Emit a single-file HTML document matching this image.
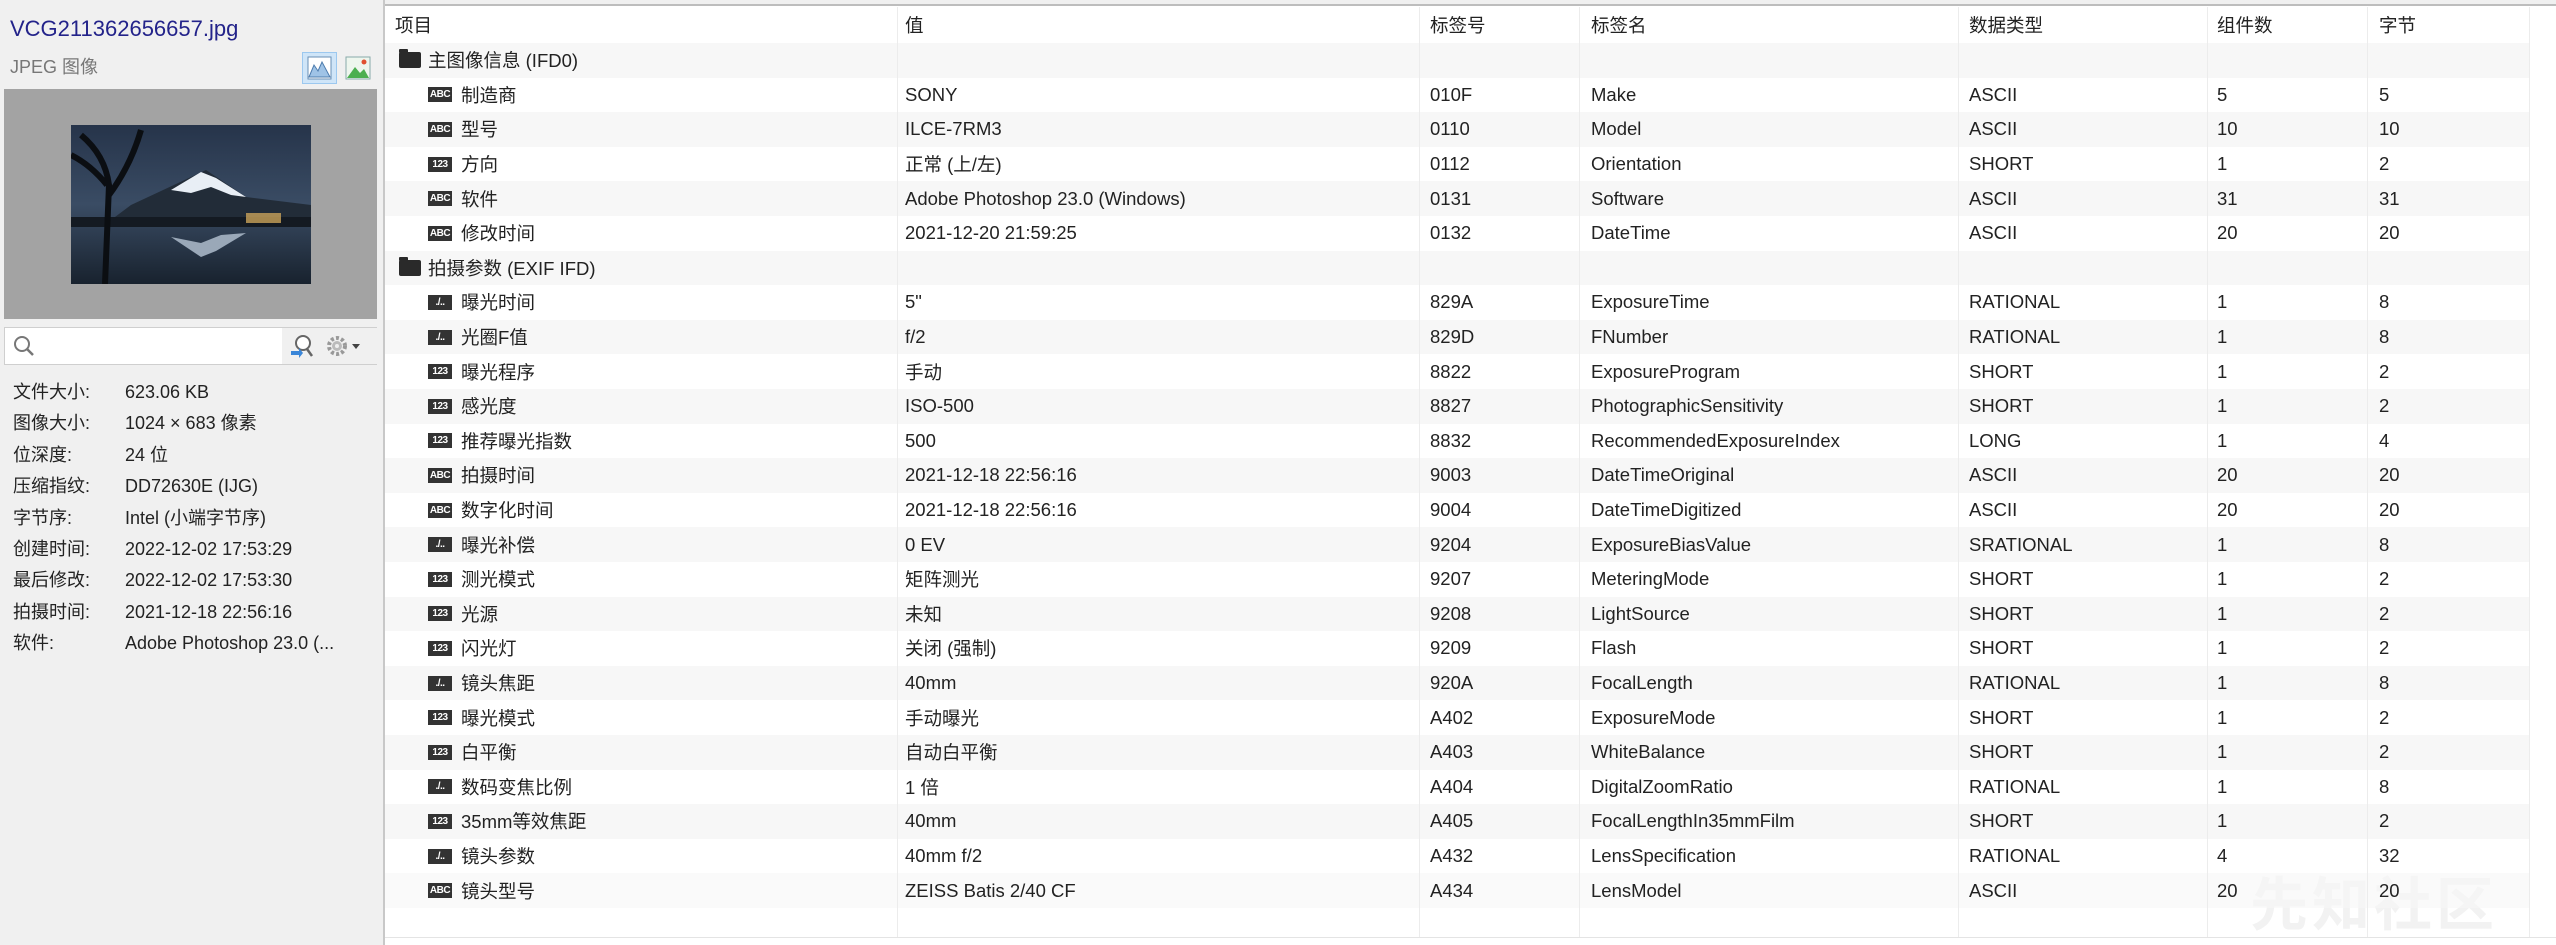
<!DOCTYPE html>
<html><head><meta charset="utf-8">
<style>
*{margin:0;padding:0;box-sizing:border-box}
body{width:2556px;height:945px;overflow:hidden;background:#f0f0f0;font-family:"Liberation Sans","Noto Sans CJK SC",sans-serif;font-size:18.5px;color:#222;position:relative}
.left{position:absolute;left:0;top:0;width:383px;height:945px;background:#f0f0f0}
.fn{position:absolute;left:10px;top:16px;font-size:22px;color:#23238a}
.jp{position:absolute;left:10px;top:53px;font-size:18px;color:#777}
.ic1{position:absolute;left:302px;top:52px;width:35px;height:32px;background:#cfe5f8;border:1px solid #9cc8ef}
.ic2{position:absolute;left:345px;top:55px;width:26px;height:26px}
.prev{position:absolute;left:4px;top:89px;width:373px;height:230px;background:#a3a3a3}
.search{position:absolute;left:4px;top:327px;width:373px;height:38px;background:#fff;border:1px solid #cfcfcf}
.info{position:absolute;left:13px;font-size:18px;color:#222;height:26px;line-height:26px;width:370px;white-space:nowrap}
.info span{display:inline-block;width:112px;vertical-align:top}
.info b{font-weight:normal;display:inline-block;vertical-align:top}
.right{position:absolute;left:383px;top:0;width:2173px;height:945px;background:#fff;border-left:2px solid #c8c8c8}
.topline{position:absolute;left:385px;top:0;width:2171px;height:6px;background:#f0f0f0;border-bottom:2px solid #bdbdbd}
.row{position:absolute;left:385px;width:2145px;height:34.6px;display:flex;align-items:center;white-space:nowrap}
.row.g{background:#f7f7f7}
.c{flex:none;height:100%;display:flex;align-items:center;border-right:1px solid #ececec;overflow:hidden}
.c1{width:513px;padding-left:10px}.c2{width:522px;padding-left:7px}.c3{width:160px;padding-left:10px}.c4{width:379px;padding-left:11px}.c5{width:249px;padding-left:10px}.c6{width:160px;padding-left:9px}.c7{width:162px;padding-left:11px}
.bd{display:inline-block;width:24px;height:15px;background:#333;color:#fff;font-size:10px;font-weight:bold;line-height:15px;text-align:center;margin-left:33px;margin-right:9px;letter-spacing:-0.5px}
.fold{display:inline-block;width:22px;height:16px;background:#2a2a2a;border-radius:2px;margin-left:4px;margin-right:7px;position:relative}
.fold:before{content:"";position:absolute;left:0;top:-3px;width:9px;height:4px;background:#2a2a2a;border-radius:1px}
.wm{position:absolute;left:2250px;top:858px;font-size:58px;color:#f2f2f2;font-family:"Noto Sans CJK SC",sans-serif;font-weight:bold;letter-spacing:4px}
.bot{position:absolute;left:385px;top:937px;width:2171px;height:1px;background:#e4e4e4}
</style></head><body>
<div class="left">
<div class="fn">VCG211362656657.jpg</div>
<div class="jp">JPEG 图像</div>
<div class="ic1"><svg width="33" height="30" viewBox="0 0 33 30"><rect x="5" y="4" width="23" height="22" fill="#fff" stroke="#6a8fb5"/><path d="M6 24 L11 12 L15 18 L19 9 L27 24Z" fill="#9fc3e6" stroke="#4d7cae"/></svg></div>
<div class="ic2"><svg width="26" height="26" viewBox="0 0 26 26"><rect x="1" y="2" width="24" height="22" fill="#eef6ee" stroke="#8aa"/><path d="M2 23 L10 12 L15 18 L19 14 L24 23Z" fill="#4caf50"/><circle cx="19" cy="7" r="2.5" fill="#e05030"/></svg></div>
<div class="prev"><svg style="position:absolute;left:67px;top:36px" width="240" height="159" viewBox="0 0 240 159">
<defs><linearGradient id="s" x1="0" y1="0" x2="0" y2="1"><stop offset="0" stop-color="#26344a"/><stop offset=".5" stop-color="#3a4c64"/><stop offset="1" stop-color="#18222e"/></linearGradient></defs>
<rect width="240" height="159" fill="url(#s)"/>
<path d="M60 80 L135 45 L175 72 L240 80 L240 95 L40 95Z" fill="#222c38"/>
<path d="M100 65 L130 47 L145 53 L175 72 L160 70 L140 62 L120 68Z" fill="#e8eef5"/>
<rect x="0" y="92" width="240" height="10" fill="#141a22"/>
<rect x="175" y="88" width="35" height="10" fill="#c9a25a" opacity=".8"/>
<path d="M100 112 L130 132 L145 126 L175 108 L150 110 L130 118Z" fill="#9aa8b8"/>
<path d="M34 159 L38 60 Q34 30 10 10 M38 70 Q60 40 70 5 M36 60 Q20 40 0 30" stroke="#0b0e12" stroke-width="6" fill="none"/>
</svg></div>
<div class="search"><svg style="position:absolute;left:7px;top:6px" width="24" height="24" viewBox="0 0 24 24"><circle cx="10" cy="10" r="7" fill="none" stroke="#777" stroke-width="2"/><path d="M15 15 L21 21" stroke="#777" stroke-width="2.5"/></svg>
<div style="position:absolute;left:277px;top:0;width:95px;height:36px;background:#f0f0f0"></div>
<svg style="position:absolute;left:283px;top:5px" width="26" height="26" viewBox="0 0 26 26"><circle cx="15" cy="10" r="7" fill="#fff" stroke="#666" stroke-width="2"/><path d="M19 16 L24 23" stroke="#666" stroke-width="2.5"/><path d="M3 18 L11 18 L11 15 L15 20 L11 25 L11 22 L3 22Z" fill="#3a86d8"/></svg>
<svg style="position:absolute;left:320px;top:6px" width="40" height="24" viewBox="0 0 40 24"><circle cx="12" cy="12" r="8" fill="none" stroke="#999" stroke-width="4" stroke-dasharray="3 2.2"/><circle cx="12" cy="12" r="5" fill="#bbb"/><circle cx="12" cy="12" r="2" fill="#eee"/><path d="M27 10 L35 10 L31 15Z" fill="#444"/></svg></div>
<div class="info" style="top:379px"><span>文件大小:</span><b>623.06 KB</b></div>
<div class="info" style="top:410px"><span>图像大小:</span><b>1024 × 683 像素</b></div>
<div class="info" style="top:442px"><span>位深度:</span><b>24 位</b></div>
<div class="info" style="top:473px"><span>压缩指纹:</span><b>DD72630E (IJG)</b></div>
<div class="info" style="top:505px"><span>字节序:</span><b>Intel (小端字节序)</b></div>
<div class="info" style="top:536px"><span>创建时间:</span><b>2022-12-02 17:53:29</b></div>
<div class="info" style="top:567px"><span>最后修改:</span><b>2022-12-02 17:53:30</b></div>
<div class="info" style="top:599px"><span>拍摄时间:</span><b>2021-12-18 22:56:16</b></div>
<div class="info" style="top:630px"><span>软件:</span><b>Adobe Photoshop 23.0 (...</b></div>
</div>
<div class="right"></div>
<div class="topline"></div>
<div class="row" style="top:7px;height:36px;background:#fff"><div class="c c1">项目</div><div class="c c2">值</div><div class="c c3">标签号</div><div class="c c4">标签名</div><div class="c c5">数据类型</div><div class="c c6">组件数</div><div class="c c7">字节</div></div>

<div class="row g" style="top:43px"><div class="c c1"><span class="fold"></span>主图像信息 (IFD0)</div><div class="c c2"></div><div class="c c3"></div><div class="c c4"></div><div class="c c5"></div><div class="c c6"></div><div class="c c7"></div></div>
<div class="row" style="top:77.6px"><div class="c c1"><span class="bd">ABC</span>制造商</div><div class="c c2">SONY</div><div class="c c3">010F</div><div class="c c4">Make</div><div class="c c5">ASCII</div><div class="c c6">5</div><div class="c c7">5</div></div>
<div class="row g" style="top:112.2px"><div class="c c1"><span class="bd">ABC</span>型号</div><div class="c c2">ILCE-7RM3</div><div class="c c3">0110</div><div class="c c4">Model</div><div class="c c5">ASCII</div><div class="c c6">10</div><div class="c c7">10</div></div>
<div class="row" style="top:146.8px"><div class="c c1"><span class="bd">123</span>方向</div><div class="c c2">正常 (上/左)</div><div class="c c3">0112</div><div class="c c4">Orientation</div><div class="c c5">SHORT</div><div class="c c6">1</div><div class="c c7">2</div></div>
<div class="row g" style="top:181.4px"><div class="c c1"><span class="bd">ABC</span>软件</div><div class="c c2">Adobe Photoshop 23.0 (Windows)</div><div class="c c3">0131</div><div class="c c4">Software</div><div class="c c5">ASCII</div><div class="c c6">31</div><div class="c c7">31</div></div>
<div class="row" style="top:216px"><div class="c c1"><span class="bd">ABC</span>修改时间</div><div class="c c2">2021-12-20 21:59:25</div><div class="c c3">0132</div><div class="c c4">DateTime</div><div class="c c5">ASCII</div><div class="c c6">20</div><div class="c c7">20</div></div>
<div class="row g" style="top:250.6px"><div class="c c1"><span class="fold"></span>拍摄参数 (EXIF IFD)</div><div class="c c2"></div><div class="c c3"></div><div class="c c4"></div><div class="c c5"></div><div class="c c6"></div><div class="c c7"></div></div>
<div class="row" style="top:285.2px"><div class="c c1"><span class="bd">./..</span>曝光时间</div><div class="c c2">5"</div><div class="c c3">829A</div><div class="c c4">ExposureTime</div><div class="c c5">RATIONAL</div><div class="c c6">1</div><div class="c c7">8</div></div>
<div class="row g" style="top:319.8px"><div class="c c1"><span class="bd">./..</span>光圈F值</div><div class="c c2">f/2</div><div class="c c3">829D</div><div class="c c4">FNumber</div><div class="c c5">RATIONAL</div><div class="c c6">1</div><div class="c c7">8</div></div>
<div class="row" style="top:354.4px"><div class="c c1"><span class="bd">123</span>曝光程序</div><div class="c c2">手动</div><div class="c c3">8822</div><div class="c c4">ExposureProgram</div><div class="c c5">SHORT</div><div class="c c6">1</div><div class="c c7">2</div></div>
<div class="row g" style="top:389px"><div class="c c1"><span class="bd">123</span>感光度</div><div class="c c2">ISO-500</div><div class="c c3">8827</div><div class="c c4">PhotographicSensitivity</div><div class="c c5">SHORT</div><div class="c c6">1</div><div class="c c7">2</div></div>
<div class="row" style="top:423.6px"><div class="c c1"><span class="bd">123</span>推荐曝光指数</div><div class="c c2">500</div><div class="c c3">8832</div><div class="c c4">RecommendedExposureIndex</div><div class="c c5">LONG</div><div class="c c6">1</div><div class="c c7">4</div></div>
<div class="row g" style="top:458.2px"><div class="c c1"><span class="bd">ABC</span>拍摄时间</div><div class="c c2">2021-12-18 22:56:16</div><div class="c c3">9003</div><div class="c c4">DateTimeOriginal</div><div class="c c5">ASCII</div><div class="c c6">20</div><div class="c c7">20</div></div>
<div class="row" style="top:492.8px"><div class="c c1"><span class="bd">ABC</span>数字化时间</div><div class="c c2">2021-12-18 22:56:16</div><div class="c c3">9004</div><div class="c c4">DateTimeDigitized</div><div class="c c5">ASCII</div><div class="c c6">20</div><div class="c c7">20</div></div>
<div class="row g" style="top:527.4px"><div class="c c1"><span class="bd">./..</span>曝光补偿</div><div class="c c2">0 EV</div><div class="c c3">9204</div><div class="c c4">ExposureBiasValue</div><div class="c c5">SRATIONAL</div><div class="c c6">1</div><div class="c c7">8</div></div>
<div class="row" style="top:562px"><div class="c c1"><span class="bd">123</span>测光模式</div><div class="c c2">矩阵测光</div><div class="c c3">9207</div><div class="c c4">MeteringMode</div><div class="c c5">SHORT</div><div class="c c6">1</div><div class="c c7">2</div></div>
<div class="row g" style="top:596.6px"><div class="c c1"><span class="bd">123</span>光源</div><div class="c c2">未知</div><div class="c c3">9208</div><div class="c c4">LightSource</div><div class="c c5">SHORT</div><div class="c c6">1</div><div class="c c7">2</div></div>
<div class="row" style="top:631.2px"><div class="c c1"><span class="bd">123</span>闪光灯</div><div class="c c2">关闭 (强制)</div><div class="c c3">9209</div><div class="c c4">Flash</div><div class="c c5">SHORT</div><div class="c c6">1</div><div class="c c7">2</div></div>
<div class="row g" style="top:665.8px"><div class="c c1"><span class="bd">./..</span>镜头焦距</div><div class="c c2">40mm</div><div class="c c3">920A</div><div class="c c4">FocalLength</div><div class="c c5">RATIONAL</div><div class="c c6">1</div><div class="c c7">8</div></div>
<div class="row" style="top:700.4px"><div class="c c1"><span class="bd">123</span>曝光模式</div><div class="c c2">手动曝光</div><div class="c c3">A402</div><div class="c c4">ExposureMode</div><div class="c c5">SHORT</div><div class="c c6">1</div><div class="c c7">2</div></div>
<div class="row g" style="top:735px"><div class="c c1"><span class="bd">123</span>白平衡</div><div class="c c2">自动白平衡</div><div class="c c3">A403</div><div class="c c4">WhiteBalance</div><div class="c c5">SHORT</div><div class="c c6">1</div><div class="c c7">2</div></div>
<div class="row" style="top:769.6px"><div class="c c1"><span class="bd">./..</span>数码变焦比例</div><div class="c c2">1 倍</div><div class="c c3">A404</div><div class="c c4">DigitalZoomRatio</div><div class="c c5">RATIONAL</div><div class="c c6">1</div><div class="c c7">8</div></div>
<div class="row g" style="top:804.2px"><div class="c c1"><span class="bd">123</span>35mm等效焦距</div><div class="c c2">40mm</div><div class="c c3">A405</div><div class="c c4">FocalLengthIn35mmFilm</div><div class="c c5">SHORT</div><div class="c c6">1</div><div class="c c7">2</div></div>
<div class="row" style="top:838.8px"><div class="c c1"><span class="bd">./..</span>镜头参数</div><div class="c c2">40mm f/2</div><div class="c c3">A432</div><div class="c c4">LensSpecification</div><div class="c c5">RATIONAL</div><div class="c c6">4</div><div class="c c7">32</div></div>
<div class="wm">先知社区</div>
<div class="row g" style="top:873.4px;background:rgba(247,247,247,0.6)"><div class="c c1"><span class="bd">ABC</span>镜头型号</div><div class="c c2">ZEISS Batis 2/40 CF</div><div class="c c3">A434</div><div class="c c4">LensModel</div><div class="c c5">ASCII</div><div class="c c6">20</div><div class="c c7">20</div></div>
<div class="row" style="top:908px;height:29px"><div class="c c1"></div><div class="c c2"></div><div class="c c3"></div><div class="c c4"></div><div class="c c5"></div><div class="c c6"></div><div class="c c7"></div></div>
<div class="bot"></div>
</body></html>
